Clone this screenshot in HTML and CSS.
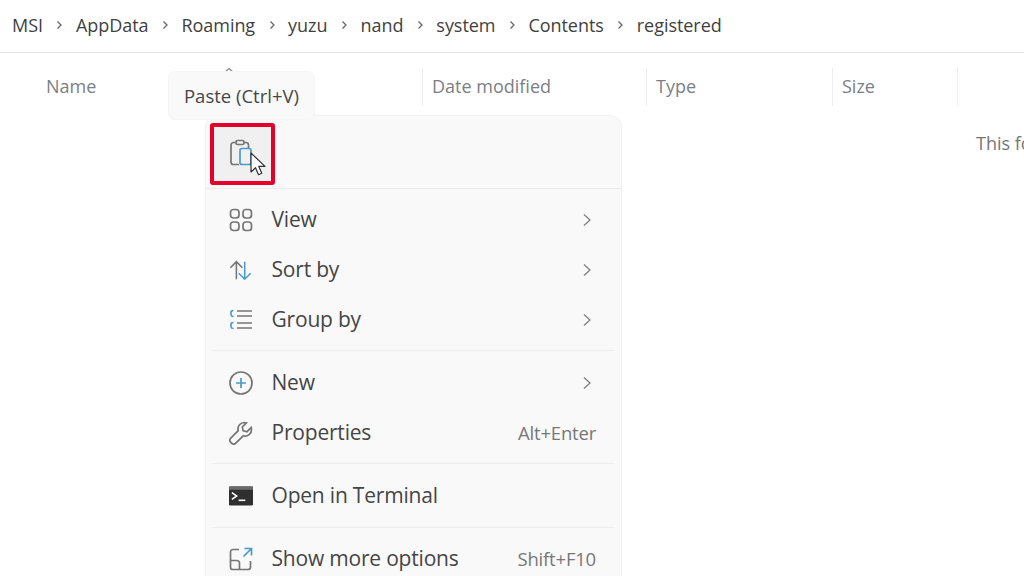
FILE: index.html
```html
<!DOCTYPE html>
<html lang="en">
<head>
<meta charset="utf-8">
<title>Explorer context menu</title>
<link rel="stylesheet" href="styles.css">
</head>
<body>
<div class="window">
  <nav class="crumbs">
    <span>MSI</span><svg class="sep" viewBox="0 0 8 10"><path d="M2.500 1.500 6 5 2.500 8.500"/></svg>
    <span>AppData</span><svg class="sep" viewBox="0 0 8 10"><path d="M2.500 1.500 6 5 2.500 8.500"/></svg>
    <span>Roaming</span><svg class="sep" viewBox="0 0 8 10"><path d="M2.500 1.500 6 5 2.500 8.500"/></svg>
    <span>yuzu</span><svg class="sep" viewBox="0 0 8 10"><path d="M2.500 1.500 6 5 2.500 8.500"/></svg>
    <span>nand</span><svg class="sep" viewBox="0 0 8 10"><path d="M2.500 1.500 6 5 2.500 8.500"/></svg>
    <span>system</span><svg class="sep" viewBox="0 0 8 10"><path d="M2.500 1.500 6 5 2.500 8.500"/></svg>
    <span>Contents</span><svg class="sep" viewBox="0 0 8 10"><path d="M2.500 1.500 6 5 2.500 8.500"/></svg>
    <span>registered</span>
  </nav>
  <div class="head">
    <div class="col col-name">Name</div>
    <div class="col col-date">Date modified</div>
    <div class="col col-type">Type</div>
    <div class="col col-size">Size</div>
  </div>
  <p class="empty">This fo</p>
</div>

<svg class="caret" viewBox="0 0 10 6"><path d="M1 5 5 1.500 9 5"/></svg>
<div class="tooltip">Paste (Ctrl+V)</div>

<div class="menu">
  <div class="toolbar">
    <div class="paste">
      <svg class="paste-icon" viewBox="0 0 24 28">
        <path class="g" d="M7 3.500H4.500A2.500 2.500 0 0 0 2 6v17a2.500 2.500 0 0 0 2.500 2.500H10"/>
        <path class="g" d="M15 3.500h2A2.500 2.500 0 0 1 19.500 6v3"/>
        <rect class="g" x="7" y="1.500" width="8" height="4" rx="1.500"/>
        <rect class="b" x="11" y="9.500" width="11" height="16" rx="2"/>
      </svg>
    </div>
  </div>
  <div class="group">
    <div class="row">
      <svg class="ico" viewBox="0 0 24 24"><rect class="g" x="1.500" y="1.500" width="8.500" height="8.500" rx="3"/><rect class="g" x="14" y="1.500" width="8.500" height="8.500" rx="3"/><rect class="g" x="1.500" y="14" width="8.500" height="8.500" rx="3"/><rect class="g" x="14" y="14" width="8.500" height="8.500" rx="3"/></svg>
      <span class="label">View</span>
      <svg class="chev" viewBox="0 0 10 14"><path d="M2 1.500 8 7 2 12.500"/></svg>
    </div>
    <div class="row">
      <svg class="ico" viewBox="0 0 26 24"><path class="g" d="M8 22V3M1.500 9.500 8 3l6.500 6.500"/><path class="b" d="M17 3v19M10.500 15.500 17 22l6.500-6.500"/></svg>
      <span class="label">Sort by</span>
      <svg class="chev" viewBox="0 0 10 14"><path d="M2 1.500 8 7 2 12.500"/></svg>
    </div>
    <div class="row">
      <svg class="ico" viewBox="0 0 24 24"><path class="b" d="M4.500 2.500C2 2.500 2 3.500 2 5.500s0 3 2.500 3M4.500 14.500C2 14.500 2 15.500 2 17.500s0 3 2.500 3"/><path class="g" d="M8 3h15M8 8h15M8 15h15M8 20h15"/></svg>
      <span class="label">Group by</span>
      <svg class="chev" viewBox="0 0 10 14"><path d="M2 1.500 8 7 2 12.500"/></svg>
    </div>
  </div>
  <div class="group">
    <div class="row">
      <svg class="ico" viewBox="0 0 24 24"><circle class="g" cx="12" cy="12" r="11"/><path class="b" d="M12 7v10M7 12h10"/></svg>
      <span class="label">New</span>
      <svg class="chev" viewBox="0 0 10 14"><path d="M2 1.500 8 7 2 12.500"/></svg>
    </div>
    <div class="row">
      <svg class="ico" viewBox="0 0 24 24"><path class="g" d="M15.500 1.500a6.500 6.500 0 0 0-6.300 8.200L1.800 17.200a3 3 0 0 0 0 4.200l.8.800a3 3 0 0 0 4.200 0l7.500-7.400A6.500 6.500 0 0 0 22.500 8l-.3-1.500-4.200 4.200-3.800-1-.9-3.700 4.100-4.100z"/></svg>
      <span class="label">Properties</span>
      <span class="key">Alt+Enter</span>
    </div>
  </div>
  <div class="group">
    <div class="row">
      <svg class="ico" viewBox="0 0 25 20"><rect x="0" y="0" width="25" height="20" rx="1.500" fill="#2f2f2f"/><rect x="0" y="0" width="25" height="3.500" fill="#6b6b6b"/><path d="M3 6.500 8 10 3 13.500" fill="none" stroke="#fff" stroke-width="1.600"/><path d="M10 14.500h7" fill="none" stroke="#fff" stroke-width="1.600"/></svg>
      <span class="label">Open in Terminal</span>
    </div>
  </div>
  <div class="group last">
    <div class="row">
      <svg class="ico" viewBox="0 0 24 24"><path class="g" d="M10 2.500H4A2.500 2.500 0 0 0 1.500 5v15A2.500 2.500 0 0 0 4 22.500h15a2.500 2.500 0 0 0 2.500-2.500v-6"/><path class="g" d="M1.500 13.500H8a2.500 2.500 0 0 1 2.500 2.500v6.500"/><path class="b" d="M14.500 9.500 22 2M15.500 1.500h7v7"/></svg>
      <span class="label">Show more options</span>
      <span class="key">Shift+F10</span>
    </div>
  </div>
</div>

<svg class="cursor" viewBox="0 0 16 26"><path d="M1 1v19l4.500-4.300 3 7 3.300-1.400-3-6.900H15z" fill="#fff" stroke="#333" stroke-width="1.200" stroke-linejoin="round"/></svg>
</body>
</html>
```
FILE: styles.css
```css
* { box-sizing: border-box; }
html, body { margin: 0; height: 100%; overflow: hidden; background: #fff; }
body { font-family: "Open Sans", "Noto Sans", sans-serif; color: #3c3c3c; position: relative; }
svg { display: block; flex: none; }

.crumbs {
  height: 53px;
  padding: 0 0 2px 12px;
  display: flex;
  align-items: center;
  gap: 12.500px;
  font-size: 18px;
  letter-spacing: -0.050px;
  color: #3f3f3f;
  border-bottom: 1.500px solid #e4e4e4;
}
.sep { width: 8px; height: 10px; }
.sep path { fill: none; stroke: #666; stroke-width: 1.300; }

.head { display: flex; height: 38px; margin-top: 15px; font-size: 18px; letter-spacing: 0; color: #7b8085; }
.col { display: flex; align-items: center; padding-left: 9px; border-right: 1px solid #eceef0; padding-bottom: 2px; }
.col-name { width: 423px; padding-left: 46px; }
.col-date { width: 224px; }
.col-type { width: 186px; }
.col-size { width: 125px; }

.empty { position: absolute; left: 976px; top: 131px; margin: 0; font-size: 18px; color: #767676; white-space: nowrap; }

.caret { position: absolute; left: 224px; top: 67px; width: 10px; height: 6px; }
.caret path { fill: none; stroke: #888; stroke-width: 1.200; }

.tooltip {
  position: absolute;
  left: 168px;
  top: 71px;
  width: 147px;
  height: 49px;
  display: flex;
  align-items: center;
  justify-content: center;
  background: #f9f9f9;
  border: 1px solid #f5f5f5;
  border-radius: 7px;
  font-size: 18.500px;
  color: #464646;
  z-index: 2;
}

.menu {
  position: absolute;
  left: 205px;
  top: 115px;
  width: 417px;
  height: 480px;
  background: #f9f9f9;
  border: 1px solid #f1f1f1;
  border-radius: 12px;
}
.toolbar { height: 73px; border-bottom: 1.500px solid #ececec; position: relative; }
.paste {
  position: absolute;
  left: 4px;
  top: 7px;
  width: 65px;
  height: 62px;
  border: 4px solid #e4002b;
  border-radius: 3px;
  background: #f0f0f0;
  display: flex;
  align-items: center;
  justify-content: center;
}
.paste-icon { width: 24px; height: 28px; margin: 0 4px 2px 0; }

.group { padding: 7px 0 5px; border-bottom: 1.500px solid #eeeeee; margin: 0 6px; }
.group:nth-child(2) { padding-top: 6px; }
.group:nth-child(4) { padding-bottom: 6px; }
.group.last { border-bottom: 0; padding-top: 6px; }
.row { height: 50px; display: flex; align-items: center; padding: 0 22px 0 17px; }
.ico { width: 24px; height: 24px; margin-right: 18.500px; }
.g, .b { fill: none; stroke-width: 1.700; }
.g { stroke: #767676; }
.b { stroke: #4a9bc9; }
.label { flex: 1; font-size: 21px; letter-spacing: -0.200px; color: #454545; padding-bottom: 2px; }
.chev { width: 10px; height: 14px; margin-right: 1px; }
.chev path { fill: none; stroke: #808080; stroke-width: 1.300; }
.key { font-size: 18.500px; letter-spacing: -0.200px; color: #777; margin-right: -3px; padding-bottom: 2px; }

.cursor { position: absolute; left: 250px; top: 152px; width: 16px; height: 26px; z-index: 3; }
```
